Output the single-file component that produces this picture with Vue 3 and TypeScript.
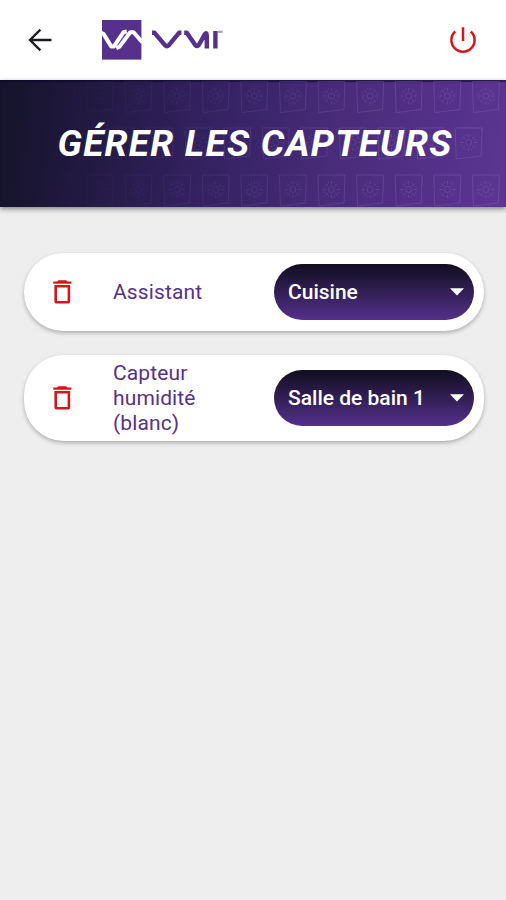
<script setup lang="ts">
interface Sensor {
  id: number
  name: string
  room: string
}

interface Tile {
  x: number
  y: number
}

const sensors: Sensor[] = [
  { id: 1, name: 'Assistant', room: 'Cuisine' },
  { id: 2, name: 'Capteur humidité (blanc)', room: 'Salle de bain 1' },
]

const pitch = 38.6
const tiles: Tile[] = []
for (let i = 0; i < 13; i++) {
  tiles.push({ x: 8.7 + i * pitch, y: 1 })
  tiles.push({ x: -8.5 + i * pitch, y: 47.5 })
  tiles.push({ x: 8.7 + i * pitch, y: 94.5 })
}
const rays: number[] = [0, 45, 90, 135, 180, 225, 270, 315]
</script>

<template>
  <div class="screen">
    <header class="topbar">
      <button class="icon-btn back" aria-label="Retour">
        <svg width="24" height="24" viewBox="0 0 24 24" fill="none" stroke="#1c1b1f" stroke-width="2.3">
          <path d="M23.5 12H2.2M12.4 1.6L2 12l10.4 10.4" />
        </svg>
      </button>
      <svg class="logo" width="122" height="40" viewBox="0 0 122 40" fill="none">
        <rect width="39.4" height="39.6" fill="#56318c" />
        <g stroke="#fff" stroke-width="4" stroke-linejoin="round">
          <path d="M-1 12.8L1.6 14L9.2 26.4H11.9L21.6 12.2L24.8 11.4" />
          <path d="M14.2 28.2L17.6 26.6L28.2 12.2H31.6L40.5 22.5" />
        </g>
        <g stroke="#56318c" stroke-width="4.4" stroke-linejoin="round">
          <path d="M50 12.8H52.6L62.9 25.2Q64.9 27.2 66.9 25.2L77 12.8H79.4" />
          <path d="M82.2 12.8H84.8L93.4 25.2Q95.2 27.2 96.8 25L102.6 14.6Q104.8 11.4 104.8 15.6V28.5" />
          <path d="M113.4 28.5V11" />
        </g>
        <path d="M116 11.8H120.6" stroke="#aaa1b9" stroke-width="2.2" />
      </svg>
      <button class="icon-btn power" aria-label="Déconnexion">
        <svg width="28" height="28" viewBox="0 0 28 28" fill="none" stroke="#d9151c" stroke-width="2.5">
          <path d="M14 1.3V15M6.2 5.5A11.6 11.6 0 1 0 21.8 5.5" />
        </svg>
      </button>
    </header>

    <section class="banner">
      <svg class="pattern" width="506" height="127" viewBox="0 0 506 127" fill="none" stroke="#9c7bd0" aria-hidden="true">
        <g v-for="(t, i) in tiles" :key="i" :transform="`translate(${t.x} ${t.y})`">
          <path d="M0.5 0.5H27.5L26.5 28.5L1.5 31.5Z" />
          <g transform="translate(14 15)">
            <circle r="3" />
            <path v-for="a in rays" :key="a" :transform="`rotate(${a})`" d="M0 -5V-8.5M2.6 -6.4L3.6 -7.6" />
          </g>
        </g>
      </svg>
      <h1 class="title">GÉRER LES CAPTEURS</h1>
    </section>

    <main class="list">
      <article v-for="s in sensors" :key="s.id" class="card">
        <button class="icon-btn trash" aria-label="Supprimer">
          <svg width="19" height="24" viewBox="0 0 19 24" fill="#d9151c">
            <path d="M5.3 0.3H13.2L14.4 1.4H18.4V3.8H0.3V1.4H4.1ZM1.4 5H17.2V21A2.6 2.6 0 0 1 14.6 23.6H4A2.6 2.6 0 0 1 1.4 21ZM4 7.6V21H14.6V7.6Z" fill-rule="evenodd" />
          </svg>
        </button>
        <span class="name">{{ s.name }}</span>
        <button class="select">
          <span>{{ s.room }}</span>
          <svg width="14" height="8" viewBox="0 0 14 8" fill="#fff"><path d="M0 0.3H14L7 7.5Z" /></svg>
        </button>
      </article>
    </main>
  </div>
</template>

<style>
body {
  background: #eee;
}
</style>

<style scoped>
.screen {
  min-height: 900px;
  background: #eee;
  font-family: Roboto, "Liberation Sans", sans-serif;
}
button {
  border: 0;
  padding: 0;
  margin: 0;
  background: none;
  font-family: inherit;
}
svg {
  display: block;
}
.topbar {
  display: flex;
  align-items: center;
  box-sizing: border-box;
  height: 80px;
  padding: 0 29px 0 28px;
  background: #fff;
}
.logo {
  margin-left: 50px;
}
.power {
  margin-left: auto;
}
.banner {
  position: relative;
  display: flex;
  align-items: center;
  justify-content: center;
  height: 127px;
  background: linear-gradient(97deg, #17142e 4%, #30205c 37%, #482b79 65%, #5a3591 98%);
  box-shadow: inset 0 2px 1px rgba(10, 4, 40, 0.55), 0 2px 5px rgba(0, 0, 0, 0.45);
}
.pattern {
  position: absolute;
  inset: 0;
  opacity: 0.26;
  mask-image: linear-gradient(90deg, transparent 8%, #000 75%);
}
.title {
  position: relative;
  margin: 0;
  padding-left: 4px;
  color: #fff;
  font-size: 37px;
  line-height: 44px;
  font-weight: 700;
  font-style: italic;
  letter-spacing: 1.25px;
  white-space: nowrap;
}
.list {
  display: flex;
  flex-direction: column;
  gap: 24.5px;
  padding: 46px 22px 0 24px;
}
.card {
  display: flex;
  align-items: center;
  box-sizing: border-box;
  min-height: 77.5px;
  padding: 5px 10px 5px 29px;
  border-radius: 40px;
  background: #fff;
  box-shadow: 0 2px 4px rgba(0, 0, 0, 0.27);
}
.name {
  width: 110px;
  margin-left: 41px;
  padding-top: 1px;
  color: #56318c;
  font-size: 21px;
  line-height: 25.1px;
  letter-spacing: 0.12px;
}
.select {
  display: flex;
  align-items: center;
  justify-content: space-between;
  box-sizing: border-box;
  width: 200px;
  height: 56px;
  margin-left: auto;
  padding: 0 10px 0 14px;
  border-radius: 28px;
  background: linear-gradient(180deg, #120f22 3%, #54308b 100%);
  color: #fff;
  font-size: 21px;
  font-weight: 500;
  white-space: nowrap;
}
</style>
